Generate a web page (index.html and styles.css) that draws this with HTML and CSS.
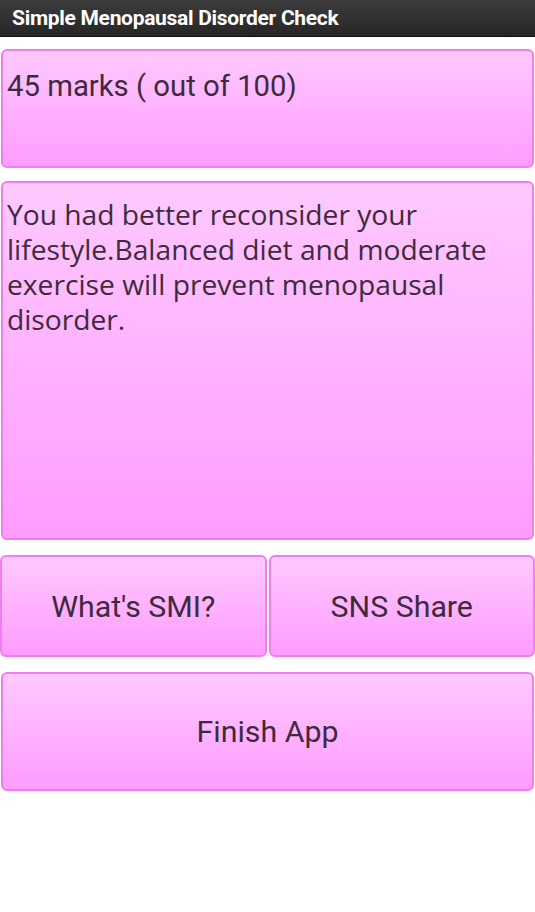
FILE: index.html
```html
<!DOCTYPE html>
<html>
<head>
<meta charset="utf-8">
<link rel="stylesheet" href="styles.css">
</head>
<body>
<div class="titlebar">Simple Menopausal Disorder Check</div>
<main class="content">
  <div class="box score">45 marks ( out of 100)</div>
  <div class="box message">You had better reconsider your lifestyle.Balanced diet and moderate exercise will prevent menopausal disorder.</div>
  <div class="row">
    <div class="box btn">What's SMI?</div>
    <div class="box btn">SNS Share</div>
  </div>
  <div class="box btn finish">Finish App</div>
</main>
</body>
</html>
```
FILE: styles.css
```css
html, body {
  margin: 0;
  padding: 0;
  background: #ffffff;
  width: 535px;
  height: 912px;
  overflow: hidden;
}
.titlebar {
  height: 37px;
  box-sizing: border-box;
  background: linear-gradient(#3c3c3c, #262626);
  border-bottom: 1px solid #111;
  color: #ffffff;
  font-family: Roboto, "Liberation Sans", sans-serif;
  font-weight: bold;
  font-size: 21px;
  line-height: 37px;
  padding-left: 12px;
  letter-spacing: -0.3px;
}
.content {
  display: flex;
  flex-direction: column;
  padding: 12px 0 0 0;
  gap: 13px;
}
.box {
  box-sizing: border-box;
  border: 2px solid #f27cf2;
  border-radius: 6px;
  background: linear-gradient(#ffc9ff, #ff9cff);
  color: #3d2b3d;
  margin: 0 1px;
}
.score {
  height: 119px;
  font-family: Roboto, "Liberation Sans", sans-serif;
  font-size: 29.3px;
  line-height: 33px;
  padding: 19px 4px 0;
}
.message {
  height: 359px;
  font-family: "Open Sans", "DejaVu Sans", sans-serif;
  font-size: 28.2px;
  line-height: 35px;
  padding: 14px 4px 0;
}
.row {
  display: flex;
  gap: 2px;
  margin: 2px 0 0;
}
.row .box {
  flex: 1;
  margin: 0;
}
.btn {
  height: 102px;
  display: flex;
  align-items: center;
  justify-content: center;
  font-family: Roboto, "Liberation Sans", sans-serif;
  font-size: 30.3px;
}
.finish {
  height: 119px;
  margin: 2px 1px 0;
}
```
